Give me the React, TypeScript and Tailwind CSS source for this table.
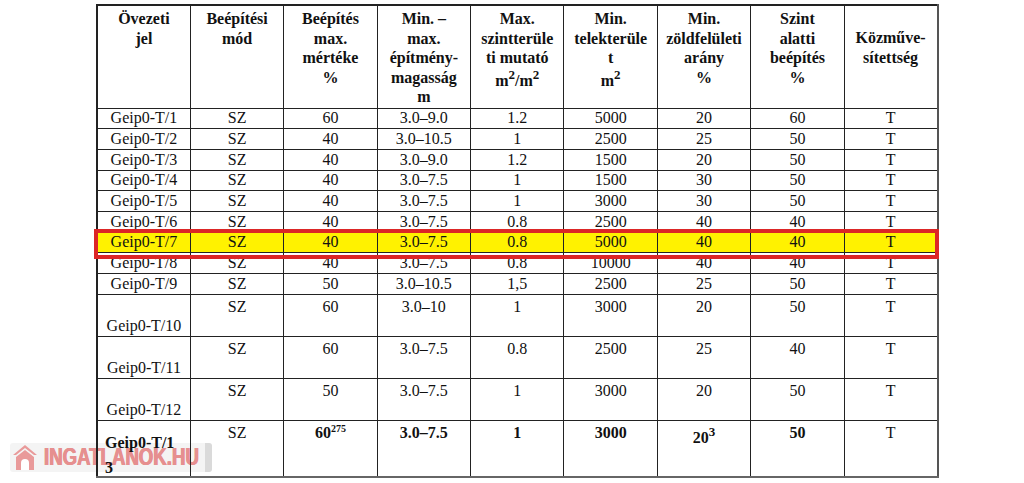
import React from "react";

type Row = string[];

const SHORT_ROWS: Row[] = [
  ["Geip0-T/1", "SZ", "60", "3.0–9.0", "1.2", "5000", "20", "60", "T"],
  ["Geip0-T/2", "SZ", "40", "3.0–10.5", "1", "2500", "25", "50", "T"],
  ["Geip0-T/3", "SZ", "40", "3.0–9.0", "1.2", "1500", "20", "50", "T"],
  ["Geip0-T/4", "SZ", "40", "3.0–7.5", "1", "1500", "30", "50", "T"],
  ["Geip0-T/5", "SZ", "40", "3.0–7.5", "1", "3000", "30", "50", "T"],
  ["Geip0-T/6", "SZ", "40", "3.0–7.5", "0.8", "2500", "40", "40", "T"],
  ["Geip0-T/7", "SZ", "40", "3.0–7.5", "0.8", "5000", "40", "40", "T"],
  ["Geip0-T/8", "SZ", "40", "3.0–7.5", "0.8", "10000", "40", "40", "T"],
  ["Geip0-T/9", "SZ", "50", "3.0–10.5", "1,5", "2500", "25", "50", "T"],
];

const TALL_ROWS: Row[] = [
  ["Geip0-T/10", "SZ", "60", "3.0–10", "1", "3000", "20", "50", "T"],
  ["Geip0-T/11", "SZ", "60", "3.0–7.5", "0.8", "2500", "25", "40", "T"],
  ["Geip0-T/12", "SZ", "50", "3.0–7.5", "1", "3000", "20", "50", "T"],
];

const HIGHLIGHT = "Geip0-T/7";

const cell = "border border-[#222] p-0 text-center";
const head = `${cell} align-top pt-[3px] font-bold leading-[19.5px] whitespace-nowrap`;
const sq = "text-[13px] -top-[7px]";

function HouseIcon() {
  return (
    <svg width="26" height="27" viewBox="0 0 26 27">
      <path d="M13 1 L25 11 L22 11 L13 4 L4 11 L1 11 Z" fill="#e99a9a" />
      <path d="M4 13 L13 6 L22 13 L22 26 L4 26 Z" fill="#e99a9a" />
      <path d="M9 26 L9 19 A4 4 0 0 1 17 19 L17 26 Z" fill="#fff" />
    </svg>
  );
}

function Watermark() {
  return (
    <div className="absolute left-[10px] top-[443px] w-[202px] h-[29px] pointer-events-none flex items-center rounded-[3px] bg-[#ececec]/60">
      <div className="ml-[2px]">
        <HouseIcon />
      </div>
      <span className="inline-block ml-[6px] font-['Liberation_Sans',Arial,sans-serif] font-bold text-[23px] leading-none text-[#e68f8f] origin-left scale-x-[0.81] whitespace-nowrap [text-shadow:0.6px_0_0_currentColor,-0.6px_0_0_currentColor]">
        INGATLANOK.HU
      </span>
      <div className="absolute right-0 top-0 h-full w-[7px] rounded-r-[3px] bg-[#cfcfcf]/70" />
    </div>
  );
}

export default function App() {
  return (
    <div className="relative w-[1024px] h-[483px] overflow-hidden bg-white font-['Liberation_Serif','Times_New_Roman',serif] text-[16px] text-[#111]">
      <Watermark />
      <div className="relative z-10 pt-[4px] pl-[96px]">
        <table className="table-fixed border-collapse w-[841px] border-t-2 border-l-2 border-r-2 border-b-2 border-t-[#222] border-l-[#222] border-r-[#555] border-b-[#666]">
          <colgroup>
            {Array.from({ length: 9 }).map((_, i) => (
              <col key={i} className="w-[93.4px]" />
            ))}
          </colgroup>
          <thead>
            <tr className="h-[103px]">
              <th className={head}>
                Övezeti
                <br />
                jel
              </th>
              <th className={head}>
                Beépítési
                <br />
                mód
              </th>
              <th className={head}>
                Beépítés
                <br />
                max.
                <br />
                mértéke
                <br />%
              </th>
              <th className={head}>
                Min. –
                <br />
                max.
                <br />
                építmény-
                <br />
                magasság
                <br />m
              </th>
              <th className={head}>
                Max.
                <br />
                szintterüle
                <br />
                ti mutató
                <br />
                <span className="inline-block pt-[3px]">
                  m<sup className={sq}>2</sup>/m<sup className={sq}>2</sup>
                </span>
              </th>
              <th className={head}>
                Min.
                <br />
                telekterüle
                <br />
                t
                <br />
                <span className="inline-block pt-[3px]">
                  m<sup className={sq}>2</sup>
                </span>
              </th>
              <th className={head}>
                Min.
                <br />
                zöldfelületi
                <br />
                arány
                <br />%
              </th>
              <th className={head}>
                Szint
                <br />
                alatti
                <br />
                beépítés
                <br />%
              </th>
              <th className={`${head} !pt-[22px]`}>
                Közműve-
                <br />
                sítettség
              </th>
            </tr>
          </thead>
          <tbody>
            {SHORT_ROWS.map((r) => (
              <tr
                key={r[0]}
                className={`h-[20.7px] leading-[18px] ${r[0] === HIGHLIGHT ? "bg-[#fff200]" : ""}`}
              >
                {r.map((v, i) => (
                  <td key={i} className={`${cell} align-middle`}>
                    {v}
                  </td>
                ))}
              </tr>
            ))}
            {TALL_ROWS.map((r) => (
              <tr key={r[0]} className="h-[42px] leading-[18px]">
                <td className={`${cell} align-bottom pb-[1px]`}>{r[0]}</td>
                {r.slice(1).map((v, i) => (
                  <td key={i} className={`${cell} align-top pt-[3px]`}>
                    {v}
                  </td>
                ))}
              </tr>
            ))}
            <tr className="h-[57px] leading-[18px]">
              <td className={`${cell} !text-left align-bottom pl-[7px] font-bold leading-[22px]`}>
                Geip0-T/1
                <br />
                <span className="relative top-[3px]">3</span>
              </td>
              <td className={`${cell} align-top pt-[3px]`}>SZ</td>
              <td className={`${cell} align-top pt-[3px] font-bold`}>
                60<sup className="text-[10px] -top-[6px]">275</sup>
              </td>
              <td className={`${cell} align-top pt-[3px] font-bold`}>3.0–7.5</td>
              <td className={`${cell} align-top pt-[3px] font-bold`}>1</td>
              <td className={`${cell} align-top pt-[3px] font-bold`}>3000</td>
              <td className={`${cell} align-top pt-[3px] font-bold`}>
                <span className="relative top-[5px]">
                  20<sup className={sq}>3</sup>
                </span>
              </td>
              <td className={`${cell} align-top pt-[3px] font-bold`}>50</td>
              <td className={`${cell} align-top pt-[3px]`}>T</td>
            </tr>
          </tbody>
        </table>
        {/* red highlight frame over the Geip0-T/7 row */}
        <div className="absolute left-[94px] top-[229px] w-[845px] h-[30px] border-[4px] border-[#dc2626] pointer-events-none" />
      </div>
    </div>
  );
}
